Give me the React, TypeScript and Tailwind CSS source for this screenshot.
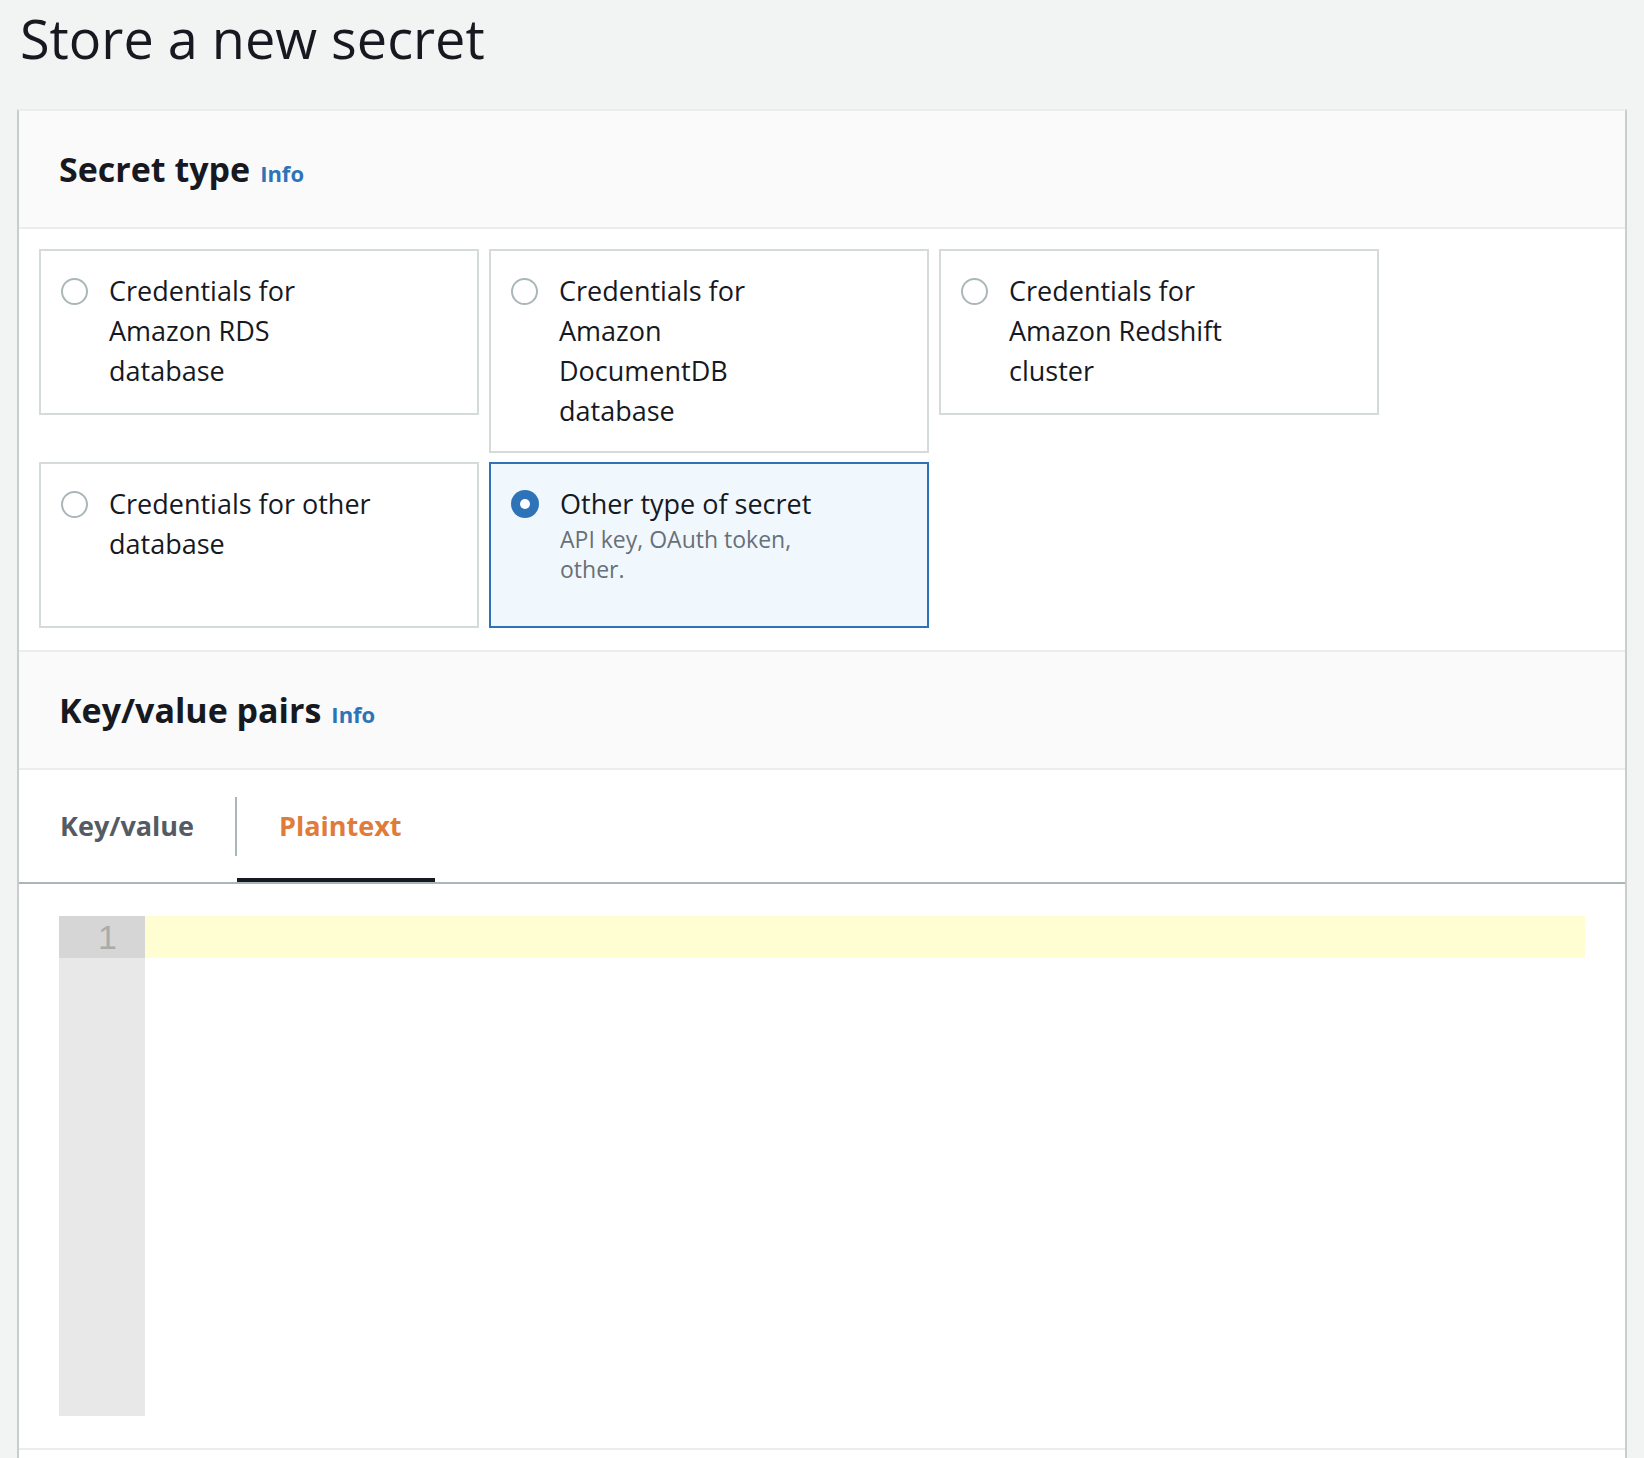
import React from "react";

function Radio({ checked }: { checked?: boolean }) {
  if (checked) {
    return (
      <span className="flex h-[28px] w-[28px] shrink-0 items-center justify-center rounded-full bg-[#2e73b8]">
        <span className="h-[10px] w-[10px] rounded-full bg-white" />
      </span>
    );
  }
  return <span className="h-[27px] w-[27px] shrink-0 rounded-full border-2 border-[#aab7b8] bg-white" />;
}

function Tile({
  lines,
  desc,
  checked,
}: {
  lines: string[];
  desc?: string[];
  checked?: boolean;
}) {
  return (
    <div
      className={
        checked
          ? "flex min-h-[166px] w-[440px] gap-[21px] border-2 border-[#2e73b8] bg-[#f1f8fd] px-[20px] py-[20px]"
          : "flex min-h-[166px] w-[440px] gap-[21px] border-2 border-[#d5dbdb] bg-white px-[20px] py-[20px]"
      }
    >
      <div className="flex h-[40px] items-center">
        <Radio checked={checked} />
      </div>
      <div className="flex flex-col">
        {lines.map((l) => (
          <span key={l} className="whitespace-nowrap text-[27px] leading-[40px] text-[#16191f]">
            {l}
          </span>
        ))}
        {desc?.map((l) => (
          <span key={l} className="whitespace-nowrap text-[23px] leading-[30px] text-[#687078]">
            {l}
          </span>
        ))}
      </div>
    </div>
  );
}

function Header({ title }: { title: string }) {
  return (
    <div className="flex h-[118px] items-center border-b-2 border-[#eaeded] bg-[#fafafa] px-[40px]">
      <div className="flex items-baseline gap-[10px]">
        <span className="text-[34px] font-bold leading-[44px] text-[#16191f]">{title}</span>
        <span className="text-[22px] font-bold text-[#2e73b8]">Info</span>
      </div>
    </div>
  );
}

export default function App() {
  return (
    <div className="min-h-screen bg-[#f2f3f3] px-[17px] font-['Open_Sans',sans-serif]">
      <div className="h-[109px] pl-[3px] pt-[6px]">
        <h1 className="text-[54px] font-medium leading-[64px] text-[#16191f]">Store a new secret</h1>
      </div>
      <div className="border-x-2 border-t-2 border-x-[#c9cdce] border-t-[#eaeded] bg-white">
        <Header title="Secret type" />
        <div className="border-b-2 border-[#eaeded] px-[20px] pb-[22px] pt-[20px]">
          <div className="grid grid-cols-[repeat(3,440px)] items-start gap-x-[10px] gap-y-[9px]">
            <Tile lines={["Credentials for", "Amazon RDS", "database"]} />
            <Tile lines={["Credentials for", "Amazon", "DocumentDB", "database"]} />
            <Tile lines={["Credentials for", "Amazon Redshift", "cluster"]} />
            <Tile lines={["Credentials for other", "database"]} />
            <Tile lines={["Other type of secret"]} desc={["API key, OAuth token,", "other."]} checked />
          </div>
        </div>
        <Header title="Key/value pairs" />
        <div className="flex h-[114px] items-center border-b-2 border-[#aab7b8]">
          <div className="flex h-[112px] w-[216px] items-center pl-[41px]">
            <span className="text-[27px] font-bold text-[#545b64]">Key/value</span>
          </div>
          <div className="h-[59px] w-[2px] bg-[#aab7b8]" />
          <div className="flex h-[112px] w-[198px] items-center border-b-4 border-[#16191f] pl-[42px] pt-[4px]">
            <span className="text-[27px] font-bold text-[#e07b39]">Plaintext</span>
          </div>
        </div>
        <div className="border-b-2 border-[#eaeded] px-[40px] pb-[32px] pt-[32px]">
          <div className="flex h-[500px] bg-white">
            <div className="flex w-[86px] flex-col bg-[#e8e8e8]">
              <div className="flex h-[42px] items-center justify-end bg-[#d6d6d6] pr-[28px] font-['Liberation_Sans',sans-serif] text-[34px] text-[#ababab]">
                1
              </div>
            </div>
            <div className="flex-1">
              <div className="h-[42px] bg-[#fffed3]" />
            </div>
          </div>
        </div>
        <div className="h-[60px] bg-white" />
      </div>
    </div>
  );
}
